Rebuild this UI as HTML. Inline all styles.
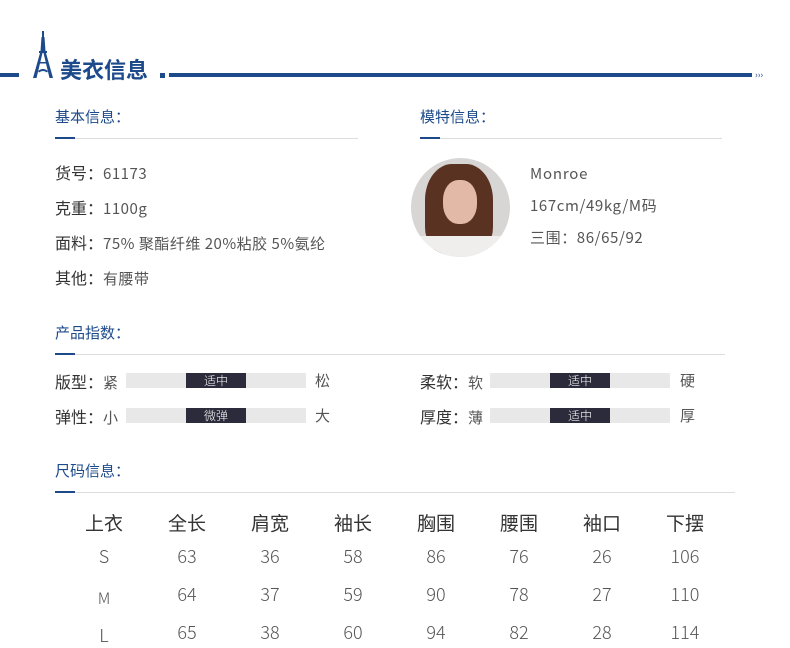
<!DOCTYPE html>
<html><head><meta charset="utf-8"><style>
body{margin:0;width:790px;height:643px;overflow:hidden;background:#fff;font-family:"Noto Sans CJK SC","Liberation Sans",sans-serif;position:relative}
.a{position:absolute;white-space:nowrap;line-height:20px}
.blue{color:#1d4a8b}
.h{font-size:15px;color:#1d4a8b}
.ul{position:absolute;height:1px;background:#ddd}
.ub{position:absolute;height:2px;width:20px;background:#1d4a8b}
.lab{font-size:16px;color:#333}
.val{font-size:15px;color:#555;letter-spacing:.5px}
.bar{position:absolute;height:15px;background:#e8e8e8}
.bar i{position:absolute;left:60px;width:60px;top:0;height:15px;background:#2b2b3b;color:#fff;font-style:normal;font-size:12px;text-align:center;line-height:15px;font-weight:300}
.th{font-size:19px;color:#333;text-align:center;width:60px;line-height:24px}
.td{font-size:18px;color:#555;text-align:center;width:60px;line-height:24px;font-weight:300}
</style></head><body>
<div class="a" style="left:0;top:73px;width:19px;height:4px;background:#1d4a8b"></div>
<svg class="a" style="left:31px;top:31px" width="24" height="48" viewBox="0 0 24 48"><g fill="#1d4a8b"><rect x="11" y="0" width="2" height="6"/><path d="M10.5 6h3l1 14h-5z"/><rect x="8" y="20" width="8" height="2"/><path d="M9 22h2.5l-6 25H2z"/><path d="M12.5 22H15l7 25h-3.5z"/><rect x="7" y="31" width="10" height="1.5"/><path d="M7 40q5-4 10 0l-1 1.5q-4-3-8 0z"/></g></svg>
<div class="a blue" style="left:60px;top:55px;font-size:22px;font-weight:bold;line-height:28px">美衣信息</div>
<div class="a" style="left:160px;top:73px;width:5px;height:5px;background:#1d4a8b"></div>
<div class="a" style="left:169px;top:73px;width:583px;height:4px;background:#1d4a8b"></div>
<div class="a blue" style="left:755px;top:65px;font-size:9px">›››</div>

<div class="a h" style="left:55px;top:107px">基本信息：</div>
<div class="ul" style="left:55px;top:138px;width:303px"></div><div class="ub" style="left:55px;top:137px"></div>
<div class="a h" style="left:420px;top:107px">模特信息：</div>
<div class="ul" style="left:420px;top:138px;width:302px"></div><div class="ub" style="left:420px;top:137px"></div>

<div class="a" style="left:55px;top:162px"><span class="lab">货号：</span><span class="val">61173</span></div>
<div class="a" style="left:55px;top:197px"><span class="lab">克重：</span><span class="val">1100g</span></div>
<div class="a" style="left:55px;top:232px"><span class="lab">面料：</span><span class="val">75% 聚酯纤维 20%粘胶 5%氨纶</span></div>
<div class="a" style="left:55px;top:267px"><span class="lab">其他：</span><span class="val">有腰带</span></div>

<div class="a" style="left:411px;top:158px;width:99px;height:99px;border-radius:50%;overflow:hidden;background:#d8d6d4">
<div class="a" style="left:14px;top:6px;width:68px;height:90px;border-radius:40% 40% 30% 30%;background:#5a3222"></div>
<div class="a" style="left:32px;top:22px;width:34px;height:44px;border-radius:45%;background:#e2b9a6"></div>
<div class="a" style="left:0;top:78px;width:99px;height:30px;background:#f0eeec"></div>
</div>
<div class="a val" style="left:530px;top:164px;letter-spacing:.8px">Monroe</div>
<div class="a val" style="left:530px;top:196px;letter-spacing:.6px">167cm/49kg/M码</div>
<div class="a val" style="left:530px;top:228px;letter-spacing:.6px">三围：86/65/92</div>

<div class="a h" style="left:55px;top:323px">产品指数：</div>
<div class="ul" style="left:55px;top:354px;width:670px"></div><div class="ub" style="left:55px;top:353px"></div>

<div class="a" style="left:55px;top:371px"><span class="lab">版型：</span><span class="val">紧</span></div>
<div class="bar" style="left:126px;top:373px;width:180px"><i>适中</i></div>
<div class="a val" style="left:315px;top:371px">松</div>
<div class="a" style="left:55px;top:406px"><span class="lab">弹性：</span><span class="val">小</span></div>
<div class="bar" style="left:126px;top:408px;width:180px"><i>微弹</i></div>
<div class="a val" style="left:315px;top:406px">大</div>
<div class="a" style="left:420px;top:371px"><span class="lab">柔软：</span><span class="val">软</span></div>
<div class="bar" style="left:490px;top:373px;width:180px"><i>适中</i></div>
<div class="a val" style="left:680px;top:371px">硬</div>
<div class="a" style="left:420px;top:406px"><span class="lab">厚度：</span><span class="val">薄</span></div>
<div class="bar" style="left:490px;top:408px;width:180px"><i>适中</i></div>
<div class="a val" style="left:680px;top:406px">厚</div>

<div class="a h" style="left:55px;top:461px">尺码信息：</div>
<div class="ul" style="left:55px;top:492px;width:680px"></div><div class="ub" style="left:55px;top:491px"></div>

<div class="a th" style="left:74px;top:511px">上衣</div><div class="a th" style="left:157px;top:511px">全长</div><div class="a th" style="left:240px;top:511px">肩宽</div><div class="a th" style="left:323px;top:511px">袖长</div><div class="a th" style="left:406px;top:511px">胸围</div><div class="a th" style="left:489px;top:511px">腰围</div><div class="a th" style="left:572px;top:511px">袖口</div><div class="a th" style="left:655px;top:511px">下摆</div>
<div class="a td" style="left:74px;top:544px">S</div><div class="a td" style="left:157px;top:544px">63</div><div class="a td" style="left:240px;top:544px">36</div><div class="a td" style="left:323px;top:544px">58</div><div class="a td" style="left:406px;top:544px">86</div><div class="a td" style="left:489px;top:544px">76</div><div class="a td" style="left:572px;top:544px">26</div><div class="a td" style="left:655px;top:544px">106</div>
<div class="a td" style="left:74px;top:585px;font-size:16px">M</div><div class="a td" style="left:157px;top:582px">64</div><div class="a td" style="left:240px;top:582px">37</div><div class="a td" style="left:323px;top:582px">59</div><div class="a td" style="left:406px;top:582px">90</div><div class="a td" style="left:489px;top:582px">78</div><div class="a td" style="left:572px;top:582px">27</div><div class="a td" style="left:655px;top:582px">110</div>
<div class="a td" style="left:74px;top:623px">L</div><div class="a td" style="left:157px;top:620px">65</div><div class="a td" style="left:240px;top:620px">38</div><div class="a td" style="left:323px;top:620px">60</div><div class="a td" style="left:406px;top:620px">94</div><div class="a td" style="left:489px;top:620px">82</div><div class="a td" style="left:572px;top:620px">28</div><div class="a td" style="left:655px;top:620px">114</div>
</body></html>
